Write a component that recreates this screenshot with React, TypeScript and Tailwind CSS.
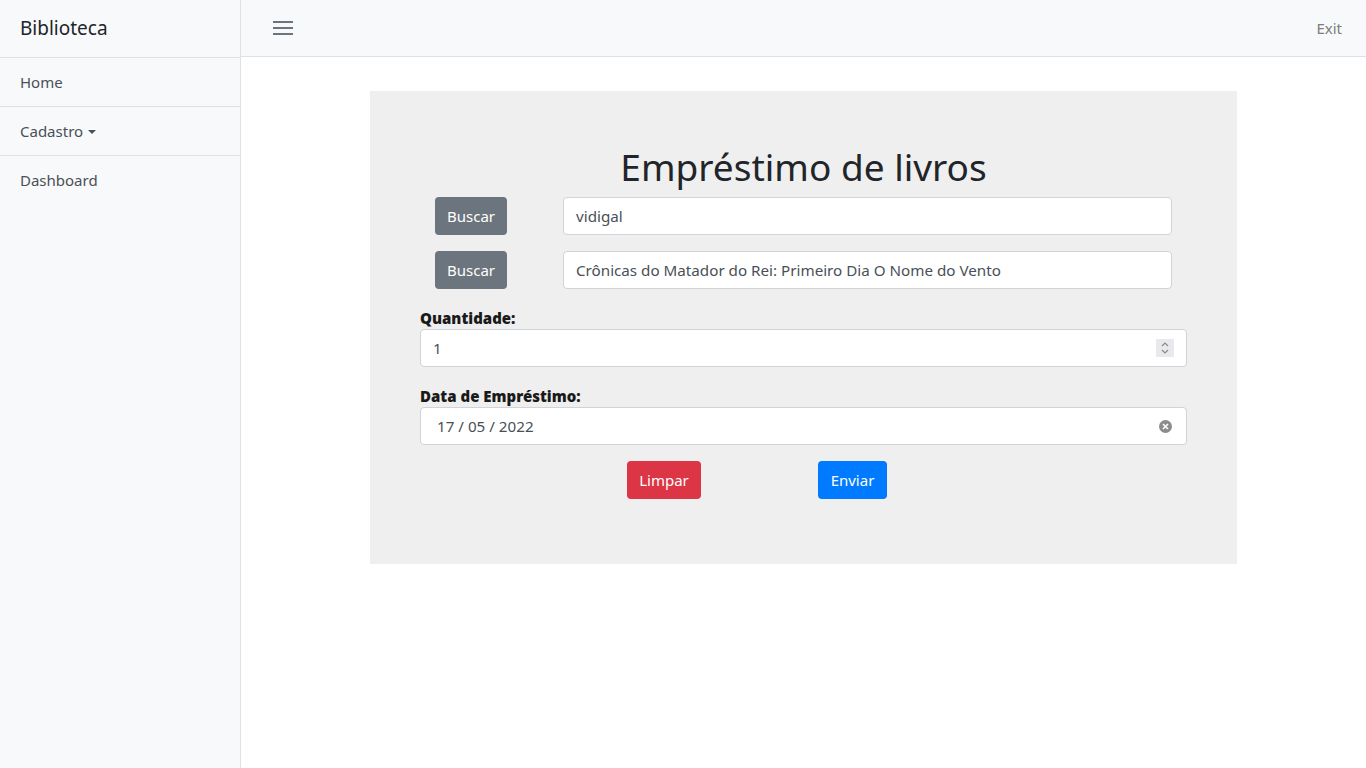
import React from "react";

const font = { fontFamily: '"Noto Sans", "Open Sans", sans-serif' };

export default function App() {
  return (
    <div className="flex min-h-[768px] w-full text-[#212529]" style={font}>
      <aside className="w-[241px] shrink-0 border-r border-[#dee2e6] bg-[#f8f9fa]">
        <div className="flex h-[58px] items-center border-b border-[#dee2e6] px-5 text-[19px]">Biblioteca</div>
        <div className="flex h-[49px] items-center border-b border-[#dee2e6] px-5 text-[15px] text-[#495057]">Home</div>
        <div className="flex h-[49px] items-center border-b border-[#dee2e6] px-5 text-[15px] text-[#495057]">
          Cadastro
          <span className="ml-[5px] mt-[1px] inline-block h-0 w-0 border-x-[4px] border-t-[4px] border-x-transparent border-t-[#495057]" />
        </div>
        <div className="flex h-[49px] items-center px-5 text-[15px] text-[#495057]">Dashboard</div>
      </aside>
      <div className="flex flex-1 flex-col">
        <header className="flex h-[57px] items-center justify-between border-b border-[#dee2e6] bg-[#f8f9fa] pl-[31px] pr-6">
          <svg width="22" height="18" viewBox="0 0 22 18">
            <path d="M1 3h20M1 9h20M1 15h20" stroke="#6c757d" strokeWidth="2" />
          </svg>
          <span className="text-[15px] text-[#7d7d7d]">Exit</span>
        </header>
        <main className="flex flex-1 justify-center bg-white pt-[34px]">
          <div className="h-[473px] w-[867px] bg-[#efefef] px-[50px] pt-[49px]">
            <h1 className="mb-[3px] text-center text-[37px] leading-[54px] text-[#212529]">Empréstimo de livros</h1>
            <div className="flex flex-col gap-4">
              <div className="flex items-center pl-[15px]">
                <button className="h-[38px] w-[72px] rounded-[4px] bg-[#6c757d] text-[15px] text-white">Buscar</button>
                <div className="ml-[56px] flex h-[38px] w-[609px] items-center rounded-[4px] border border-[#ced4da] bg-white px-3 text-[15.2px] text-[#495057]">vidigal</div>
              </div>
              <div className="flex items-center pl-[15px]">
                <button className="h-[38px] w-[72px] rounded-[4px] bg-[#6c757d] text-[15px] text-white">Buscar</button>
                <div className="ml-[56px] flex h-[38px] w-[609px] items-center rounded-[4px] border border-[#ced4da] bg-white px-3 text-[15.2px] text-[#495057]">Crônicas do Matador do Rei: Primeiro Dia O Nome do Vento</div>
              </div>
            </div>
            <div className="mt-[18px] text-[15px] font-black leading-[22px] text-[#1a1a1a]">Quantidade:</div>
            <div className="flex h-[38px] items-center justify-between rounded-[4px] border border-[#ced4da] bg-white pl-3 pr-[12px] text-[15.2px] text-[#495057]">
              <span>1</span>
              <span className="flex h-[18px] w-[18px] items-center justify-center bg-[#e9e9ed]">
                <svg width="10" height="14" viewBox="0 0 10 14">
                  <path d="M2 5l3-3 3 3M2 9l3 3 3-3" stroke="#8a8a8a" strokeWidth="1.2" fill="none" />
                </svg>
              </span>
            </div>
            <div className="mt-[18px] text-[15px] font-black leading-[22px] text-[#1a1a1a]">Data de Empréstimo:</div>
            <div className="flex h-[38px] items-center justify-between rounded-[4px] border border-[#ced4da] bg-white pl-4 pr-[14px] text-[15.2px] text-[#495057]">
              <span>17 / 05 / 2022</span>
              <svg width="13" height="13" viewBox="0 0 13 13">
                <circle cx="6.5" cy="6.5" r="6.5" fill="#8c8c8c" />
                <path d="M4 4l5 5M9 4l-5 5" stroke="white" strokeWidth="1.6" />
              </svg>
            </div>
            <div className="mt-4 flex">
              <button className="ml-[207px] h-[38px] w-[74px] rounded-[4px] bg-[#dc3545] text-[15px] text-white">Limpar</button>
              <button className="ml-[117px] h-[38px] w-[69px] rounded-[4px] bg-[#007bff] text-[15px] text-white">Enviar</button>
            </div>
          </div>
        </main>
      </div>
    </div>
  );
}
